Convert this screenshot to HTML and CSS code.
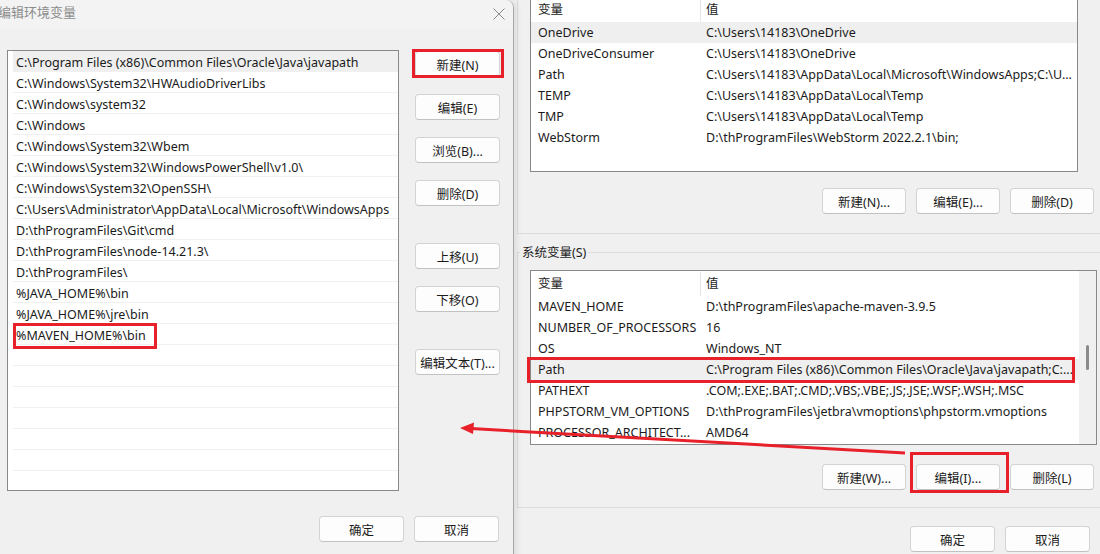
FILE: index.html
```html
<!DOCTYPE html>
<html lang="zh-CN">
<head>
  <meta charset="UTF-8" />
  <title>编辑环境变量</title>
  <link rel="stylesheet" href="styles.css">
</head>
<body>
  <div class="screen">
    <div class="edit-dialog">
      <div class="titlebar">
        <span class="title">编辑环境变量</span>
        <svg class="close" width="12" height="12" viewBox="0 0 12 12"><path d="M0.5 0.5L11.5 11.5M11.5 0.5L0.5 11.5" /></svg>
      </div>

      <div class="edit-body">
        <div class="path-list">
          <div class="path-row selected">C:\Program Files (x86)\Common Files\Oracle\Java\javapath</div>
          <div class="path-row">C:\Windows\System32\HWAudioDriverLibs</div>
          <div class="path-row">C:\Windows\system32</div>
          <div class="path-row">C:\Windows</div>
          <div class="path-row">C:\Windows\System32\Wbem</div>
          <div class="path-row">C:\Windows\System32\WindowsPowerShell\v1.0\</div>
          <div class="path-row">C:\Windows\System32\OpenSSH\</div>
          <div class="path-row">C:\Users\Administrator\AppData\Local\Microsoft\WindowsApps</div>
          <div class="path-row">D:\thProgramFiles\Git\cmd</div>
          <div class="path-row">D:\thProgramFiles\node-14.21.3\</div>
          <div class="path-row">D:\thProgramFiles\</div>
          <div class="path-row">%JAVA_HOME%\bin</div>
          <div class="path-row">%JAVA_HOME%\jre\bin</div>
          <div class="path-row">%MAVEN_HOME%\bin</div>
          <div class="path-row"></div>
          <div class="path-row"></div>
          <div class="path-row"></div>
          <div class="path-row"></div>
          <div class="path-row"></div>
          <div class="path-row"></div>
        </div>

        <div class="side-buttons">
          <button class="btn">新建(N)</button>
          <button class="btn">编辑(E)</button>
          <button class="btn">浏览(B)...</button>
          <button class="btn">删除(D)</button>
          <button class="btn spaced">上移(U)</button>
          <button class="btn">下移(O)</button>
          <button class="btn spaced">编辑文本(T)...</button>
        </div>
      </div>

      <div class="edit-footer">
        <button class="btn">确定</button>
        <button class="btn">取消</button>
      </div>
    </div>

    <div class="env-window">
      <div class="user-group">
        <div class="var-list user-list">
          <div class="var-head">
            <span class="col-name">变量</span>
            <span class="col-value">值</span>
          </div>
          <div class="var-row selected"><span>OneDrive</span><span>C:\Users\14183\OneDrive</span></div>
          <div class="var-row"><span>OneDriveConsumer</span><span>C:\Users\14183\OneDrive</span></div>
          <div class="var-row"><span>Path</span><span>C:\Users\14183\AppData\Local\Microsoft\WindowsApps;C:\U...</span></div>
          <div class="var-row"><span>TEMP</span><span>C:\Users\14183\AppData\Local\Temp</span></div>
          <div class="var-row"><span>TMP</span><span>C:\Users\14183\AppData\Local\Temp</span></div>
          <div class="var-row"><span>WebStorm</span><span>D:\thProgramFiles\WebStorm 2022.2.1\bin;</span></div>
        </div>
        <div class="btn-row user-buttons">
          <button class="btn">新建(N)...</button>
          <button class="btn">编辑(E)...</button>
          <button class="btn">删除(D)</button>
        </div>
      </div>

      <fieldset class="sys-group">
        <legend>系统变量(S)</legend>
        <div class="var-list sys-list">
          <div class="sys-content">
            <div class="var-head">
              <span class="col-name">变量</span>
              <span class="col-value">值</span>
            </div>
            <div class="var-row"><span>MAVEN_HOME</span><span>D:\thProgramFiles\apache-maven-3.9.5</span></div>
            <div class="var-row"><span>NUMBER_OF_PROCESSORS</span><span>16</span></div>
            <div class="var-row"><span>OS</span><span>Windows_NT</span></div>
            <div class="var-row selected"><span>Path</span><span>C:\Program Files (x86)\Common Files\Oracle\Java\javapath;C:...</span></div>
            <div class="var-row"><span>PATHEXT</span><span>.COM;.EXE;.BAT;.CMD;.VBS;.VBE;.JS;.JSE;.WSF;.WSH;.MSC</span></div>
            <div class="var-row"><span>PHPSTORM_VM_OPTIONS</span><span>D:\thProgramFiles\jetbra\vmoptions\phpstorm.vmoptions</span></div>
            <div class="var-row"><span>PROCESSOR_ARCHITECT...</span><span>AMD64</span></div>
          </div>
          <div class="scrollbar"><div class="thumb"></div></div>
        </div>
        <div class="btn-row sys-buttons">
          <button class="btn">新建(W)...</button>
          <button class="btn">编辑(I)...</button>
          <button class="btn">删除(L)</button>
        </div>
      </fieldset>

      <div class="window-footer">
        <button class="btn">确定</button>
        <button class="btn">取消</button>
      </div>
    </div>

    <!-- red annotations drawn over the screenshot -->
    <svg class="annotations" width="1100" height="554" viewBox="0 0 1100 554">
      <rect x="413.5" y="50.5" width="89" height="26" />
      <rect x="14.5" y="324.5" width="141" height="23" />
      <rect x="528.5" y="358.5" width="545" height="23" />
      <rect x="911.5" y="453.5" width="96" height="38" />
      <path class="arrow-line" d="M905 453L471 428.6" />
      <path class="arrow-head" d="M460 428L474 422.5L473 434Z" />
    </svg>
  </div>
</body>
</html>
```

FILE: styles.css
```css
* {
  box-sizing: border-box;
}
body {
  margin: 0;
  font-family: "Noto Sans", "Noto Sans CJK SC", sans-serif;
  font-size: 12.5px;
  color: #1b1b1b;
  background: #f0f0f0;
}
.screen {
  position: relative;
  display: flex;
  width: 1100px;
  height: 554px;
  overflow: hidden;
}

/* buttons */
.btn {
  height: 26px;
  width: 85px;
  padding: 0;
  font: inherit;
  color: #1b1b1b;
  background: #fdfdfd;
  border: 1px solid #d3d3d3;
  border-bottom-color: #c2c2c2;
  border-radius: 4px;
}

/* left dialog */
.edit-dialog {
  position: relative;
  z-index: 1;
  flex: none;
  width: 514px;
  height: 560px;
  background: #f0f0f0;
  border-right: 1px solid #a8a8a8;
  border-top-right-radius: 8px;
  box-shadow: 3px 0 6px rgba(0, 0, 0, 0.08);
}
.titlebar {
  display: flex;
  justify-content: space-between;
  align-items: flex-start;
  height: 29px;
  padding-right: 8px;
  background: #f3f3f3;
  border-top-right-radius: 8px;
}
.title {
  margin-left: -2px;
  line-height: 24px;
  font-size: 13px;
  color: #8c8c8c;
}
.close {
  margin-top: 8px;
  fill: none;
  stroke: #8a8a8a;
  stroke-width: 1;
}
.edit-body {
  display: flex;
  gap: 16px;
  padding: 21px 0 0 7px;
}
.path-list {
  width: 392px;
  height: 441px;
  padding-left: 5px;
  background: #fff;
  border: 1px solid #888;
  overflow: hidden;
}
.path-row {
  height: 21px;
  padding: 2px 0 0 3px;
  line-height: 19px;
  white-space: nowrap;
  border-bottom: 1px solid #f0f0f0;
}
.path-row.selected {
  background: #efefef;
}
.side-buttons {
  display: flex;
  flex-direction: column;
  gap: 17px;
  padding-top: 1px;
}
.side-buttons .spaced {
  margin-top: 20px;
}
.edit-footer {
  display: flex;
  justify-content: flex-end;
  gap: 10px;
  padding: 25px 14px 0 0;
}

/* right window */
.env-window {
  flex: none;
  width: 600px;
}
.user-group {
  margin: -30px 4px 0 3px;
  padding: 26px 15px 19px 12px;
  border: 1px solid #dcdcdc;
}
.var-list {
  height: 175px;
  background: #fff;
  border: 1px solid #888;
  overflow: hidden;
}
.user-list {
  width: 548px;
}
.var-head,
.var-row {
  display: grid;
  grid-template-columns: 170px 1fr;
  white-space: nowrap;
}
.var-head {
  height: 24px;
  line-height: 24px;
}
.var-head .col-name {
  padding-left: 7px;
  border-right: 1px solid #e5e5e5;
}
.var-head .col-value {
  padding-left: 5px;
}
.var-row {
  height: 21px;
  line-height: 21px;
}
.var-row span {
  overflow: hidden;
}
.var-row span:first-child {
  padding-left: 7px;
}
.var-row span:last-child {
  padding-left: 5px;
}
.var-row.selected {
  background: #efefef;
}
.btn-row {
  display: flex;
  justify-content: flex-end;
  gap: 10px;
}
.btn-row .btn {
  width: 84px;
}
.user-buttons {
  margin-top: 16px;
}

.sys-group {
  margin: 10px 4px 0 3px;
  padding: 9px 15px 17px 12px;
  min-width: 0;
  border: 1px solid #dcdcdc;
}
.sys-group legend {
  margin-left: -10px;
  padding: 0 2px;
  line-height: 17px;
}
.sys-list {
  display: flex;
  width: 567px;
}
.sys-content {
  flex: 1;
  padding-top: 1px;
  overflow: hidden;
}
.scrollbar {
  display: flex;
  justify-content: center;
  width: 17px;
  padding-top: 74px;
  background: #f0f0f0;
}
.thumb {
  width: 3px;
  height: 25px;
  border-radius: 2px;
  background: #8a8a8a;
}
.sys-buttons {
  margin-top: 19px;
}
.window-footer {
  display: flex;
  justify-content: flex-end;
  gap: 10px;
  padding: 18px 24px 0 0;
}

/* annotations */
.annotations {
  position: absolute;
  top: 0;
  left: 0;
  z-index: 2;
  pointer-events: none;
}
.annotations rect {
  fill: none;
  stroke: #e8202a;
  stroke-width: 3;
}
.arrow-line {
  stroke: #e8202a;
  stroke-width: 3;
  fill: none;
}
.arrow-head {
  fill: #e8202a;
}
```
